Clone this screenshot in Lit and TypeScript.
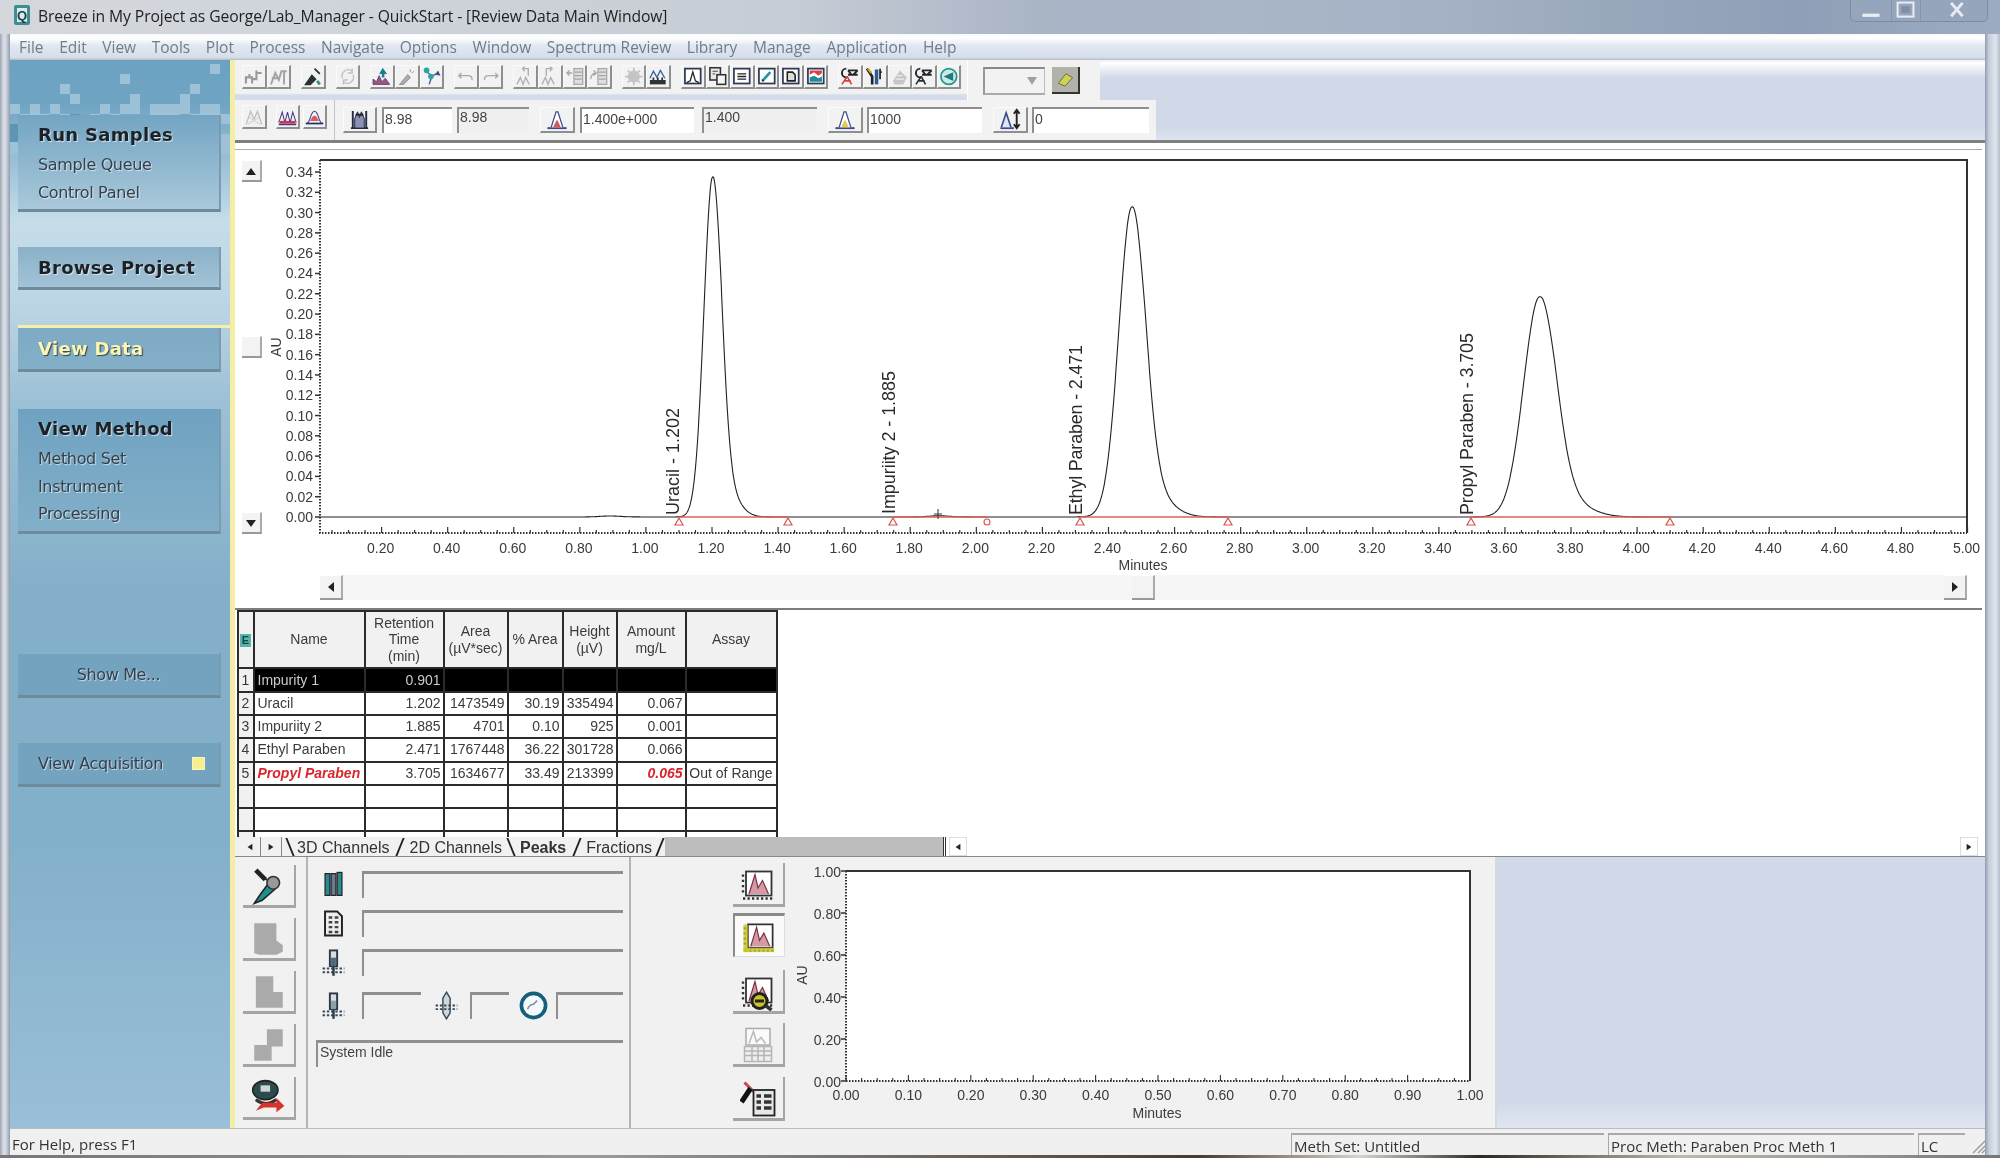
import { LitElement, html, css, svg } from "lit";
import { customElement } from "lit/decorators.js";

const ico = (body: any) => html`<svg class="i" viewBox="0 0 24 24">${body}</svg>`;
const frame = (inner: any, c = "#2d3a55") => ico(svg`<rect x="3" y="3" width="18" height="17" fill="#fff" stroke="${c}" stroke-width="2"/>${inner}`);

const T1 = [
  ico(svg`<path d="M3 20V13H10V20M10 15H15V8H21M15 8V5M7 13V9" fill="none" stroke="#9a9a9a" stroke-width="2.4"/>`),
  ico(svg`<path d="M3 21L8 8L12 16L15 6L21 6M4 14H13M18 6V21" fill="none" stroke="#a3a3a3" stroke-width="2.2"/>`),
  ico(svg`<path d="M14 3L20 9M4 21L11 11L15 15L9 21Z" fill="#26332f" stroke="#26332f" stroke-width="2"/><path d="M17 17L20 21" stroke="#3f8a6a" stroke-width="3"/>`),
  ico(svg`<path d="M6 14A7 7 0 0 1 17 6M18 10A7 7 0 0 1 7 18M17 3V8H12M7 21V16H12" fill="none" stroke="#c0c0c0" stroke-width="1.6"/>`),
  ico(svg`<path d="M2 21V15L6 18L9 11L12 18L16 14L21 21Z" fill="#a5566f" stroke="#4a3f8c"/><path d="M13 2L18 9H15V13H12V9H9Z" fill="#1e7f8c"/>`),
  ico(svg`<path d="M4 21L13 10L16 13L8 21ZM16 4V7M20 6L18 8" fill="#aeaeae" stroke="#9a9a9a" stroke-width="1.2"/>`),
  ico(svg`<path d="M5 5L12 12L20 7M12 12L9 21" stroke="#4b5d8c" stroke-width="1.6" fill="none"/><circle cx="6" cy="5" r="3.2" fill="#2ca3a8"/><circle cx="11" cy="12" r="3.2" fill="#2ca3a8"/><path d="M19 5L22 11L16 10Z" fill="#3a4e80"/>`),
  ico(svg`<path d="M6 9L3 12L6 15M3 12H13Q19 12 18 17" transform="translate(1 -1)" fill="none" stroke="#a8a8a8" stroke-width="1.6"/>`),
  ico(svg`<path d="M18 9L21 12L18 15M21 12H11Q5 12 6 17" transform="translate(-1 -1)" fill="none" stroke="#a8a8a8" stroke-width="1.6"/>`),
  ico(svg`<path d="M3 21L7 13L10 21L13 13L17 21M9 3H16V11M9 3L12 1M9 3L12 6" fill="none" stroke="#b0b0b0" stroke-width="1.6"/>`),
  ico(svg`<path d="M3 21L7 13L10 21L13 13L17 21M15 3H8V11M15 3L12 1M15 3L12 6" fill="none" stroke="#b0b0b0" stroke-width="1.6"/>`),
  ico(svg`<rect x="11" y="3" width="10" height="18" fill="#ddd" stroke="#aaa" stroke-width="1.5"/><path d="M12 7H20M12 11H20M12 15H20M3 8H9M6 5L3 8L6 11" fill="none" stroke="#a5a5a5" stroke-width="1.5"/>`),
  ico(svg`<rect x="11" y="3" width="10" height="18" fill="#ddd" stroke="#aaa" stroke-width="1.5"/><path d="M12 7H20M12 11H20M12 15H20M3 15A6 6 0 0 1 9 8M6 5L9 8L6 11" fill="none" stroke="#a5a5a5" stroke-width="1.5"/>`),
  ico(svg`<circle cx="12" cy="12" r="7" fill="#c4c4c4"/><circle cx="12" cy="12" r="2.4" fill="#efefef"/><path d="M12 2V22M2 12H22M5 5L19 19M19 5L5 19" stroke="#c4c4c4" stroke-width="2"/>`),
  ico(svg`<path d="M3 14L7 6L11 13L15 5L20 14" fill="none" stroke="#3a5fa0" stroke-width="1.5"/><rect x="3" y="16" width="18" height="5" fill="#2e3437"/><path d="M7 13V16M12 13V16M17 13V16" stroke="#2e3437" stroke-width="2"/>`),
  frame(svg`<path d="M5 19L9 17L12 7L15 17L19 19" fill="none" stroke="#222" stroke-width="1.5"/>`),
  ico(svg`<rect x="3" y="2" width="12" height="14" fill="#e8e8e8" stroke="#333" stroke-width="1.8"/><rect x="11" y="10" width="10" height="11" fill="#f5f5f5" stroke="#333" stroke-width="1.8"/><path d="M6 6H12M6 9H9" stroke="#333"/>`),
  frame(svg`<path d="M7 9H17M7 12H17M7 15H17" stroke="#222" stroke-width="1.7"/>`),
  frame(svg`<path d="M7 17L16 7" stroke="#1f9aa5" stroke-width="3.2"/><path d="M6 18L9 17L7 15Z" fill="#222"/>`),
  frame(svg`<path d="M8 7H14L17 10V17H8Z" fill="#ddd" stroke="#222" stroke-width="1.8"/>`),
  frame(svg`<path d="M5 10L10 7L15 11L19 8V5H5Z" fill="#d8404a"/><path d="M5 18V13L10 11L15 14L19 12V18Z" fill="#1f8a95"/>`),
  ico(svg`<path d="M10 10H21M10 5H21M10 5L14 10M21 5L16 10M8 3A5 5 0 0 0 8 13" fill="none" stroke="#23262a" stroke-width="2.2"/><path d="M9 12L3 21M9 12L14 21M5 17H13" stroke="#d43f3f" stroke-width="1.8" fill="none"/>`),
  ico(svg`<path d="M3 3L9 12L9 21" stroke="#222" stroke-width="3" fill="none"/><path d="M4 3L8 8" stroke="#c9a62d" stroke-width="2.4"/><path d="M14 4V21" stroke="#2a5c94" stroke-width="4"/><path d="M18 3V15M20 7H17" stroke="#222" stroke-width="2"/>`),
  ico(svg`<path d="M4 17L12 5L20 13L16 21H6Z" fill="#c6c6c6"/><path d="M7 15H17M9 11H15" stroke="#ececec" stroke-width="1.4"/>`),
  ico(svg`<path d="M10 10H21M10 5H21M10 5L14 10M21 5L16 10M8 3A5 5 0 0 0 8 13" fill="none" stroke="#23262a" stroke-width="2.2"/><path d="M9 12L3 21M9 12L14 21M5 17H13" stroke="#2b2f33" stroke-width="1.8" fill="none"/>`),
  ico(svg`<circle cx="12" cy="12" r="9" fill="#cfe9e6" stroke="#1f9a93" stroke-width="2"/><path d="M6 12L17 7V17Z" fill="#1c7c80"/>`),
];

const iGrayPk = ico(svg`<path d="M3 21L8 6L12 15L16 6L21 21" fill="#efefef" stroke="#b9b9b9" stroke-width="1.3"/><path d="M5 12L19 21M19 12L5 21" stroke="#c9c9c9"/>`);
const iRedPk = ico(svg`<path d="M2 21H22" stroke="#4b3a8c" stroke-width="2"/><path d="M2 19L6 7L9 19L12 7L15 19L18 7L22 19" fill="none" stroke="#4b3a8c" stroke-width="1.2"/><path d="M3 20V17H21V20Z" fill="#c63a4a"/>`);
const iBell = ico(svg`<path d="M3 20C8 19 7 6 12 6C17 6 16 19 21 20Z" fill="#f2f2f2" stroke="#3a3f8c" stroke-width="1.2"/><path d="M7 17C9 13 10 11 12 11C14 11 15 13 17 17Z" fill="#e05a5a"/><path d="M2 20H22" stroke="#23306b" stroke-width="2"/>`);
const iBars = ico(svg`<path d="M5 3V21M19 3V21M3 21H21" stroke="#222b4a" stroke-width="2"/><path d="M7 21V11L10 4L12 10L14 4L17 11V21Z" fill="#8c8fb8" stroke="#222"/><path d="M8 7H16" stroke="#222" stroke-width="2"/>`);
const iPkTri = (c: string) => ico(svg`<path d="M2 21H22" stroke="#3a4a8a" stroke-width="2"/><path d="M6 20L11 4H13L18 20" fill="#fff" stroke="#3a4a8a" stroke-width="1.3"/><path d="M8 20L12 12L16 20Z" fill="${c}"/>`);
const iPkArr = ico(svg`<path d="M2 21H16" stroke="#3a4a8a" stroke-width="2"/><path d="M3 20L8 5L13 20" fill="#dfe4f6" stroke="#3a4a8a" stroke-width="1.7"/><path d="M19 3V20M16 6L19 2L22 6M16 17L19 21L22 17" fill="none" stroke="#222" stroke-width="2"/>`);

const iTool = ico(svg`<path d="M4 2L10 8" stroke="#222" stroke-width="3"/><path d="M9 7L18 12L15 15L8 21L3 23L7 17L13 9Z" fill="#1f8e8f" stroke="#222" stroke-width="1"/><circle cx="15" cy="10" r="4" fill="#999" stroke="#333"/>`);
const iGA = ico(svg`<path d="M3 2H17V13L21 16V20L17 22H6L3 21Z" fill="#aaa"/>`);
const iGB = ico(svg`<path d="M4 2H15V12H21V22H4Z" fill="#aaa"/>`);
const iGC = ico(svg`<path d="M11 2H21V13H14V22H3V12H11Z" fill="#aaa"/>`);
const iDisc = ico(svg`<ellipse cx="10" cy="7" rx="8" ry="6" fill="#2d4a4f" stroke="#222"/><rect x="7" y="4" width="6" height="4" fill="#cfd4d4"/><path d="M4 13Q10 18 17 13" stroke="#333" stroke-width="2" fill="none"/><path d="M4 20L8 15H17V12L22 17L17 21V18H9Z" fill="#d8322c"/>`);
const iCol = ico(svg`<rect x="5" y="3" width="4" height="18" fill="#2a8a94" stroke="#222"/><rect x="10" y="3" width="4" height="18" fill="#6c7b92" stroke="#222"/><rect x="15" y="2" width="4" height="19" fill="#2a8a94" stroke="#222"/>`);
const iDoc = ico(svg`<path d="M5 2H15L19 6V22H5Z" fill="#eee" stroke="#222" stroke-width="1.6"/><path d="M8 7H11M13 7H16M8 11H11M13 11H16M8 15H11M13 15H16M8 19H11M13 19H16" stroke="#444" stroke-width="2"/>`);
const iInj = (c: string) => ico(svg`<rect x="9" y="2" width="6" height="13" fill="#ddd" stroke="#2a3a4a" stroke-width="1.6"/><rect x="10" y="8" width="4" height="7" fill="${c}"/><path d="M3 17H21M3 20H21" stroke="#3a4a5a" stroke-width="1.6" stroke-dasharray="2 1.5"/><path d="M12 15V23" stroke="#2a3a4a" stroke-width="2"/>`);
const iValve = ico(svg`<path d="M12 1L15 6V18L12 23L9 18V6Z" fill="#cfd8d8" stroke="#3a4a5a" stroke-width="1.2"/><path d="M3 12H21M3 15H21" stroke="#3a4a5a" stroke-width="1.5" stroke-dasharray="2 1.5"/>`);
const iGauge = ico(svg`<circle cx="12" cy="12" r="10" fill="#f4fafc" stroke="#14607a" stroke-width="3"/><path d="M7 15Q9 11 12 11L15 8" stroke="#7c929c" stroke-width="1.3" fill="none"/>`);

const chart = (extra: any = "") => ico(svg`<rect x="4" y="3" width="17" height="16" fill="#fff" stroke="#333" stroke-width="1.2"/><path d="M6 18L10 5L12 14L15 9L19 18" fill="#d69aa4" stroke="#7a3040" stroke-width=".8"/><path d="M2 21H22" stroke="#333" stroke-width="1.6" stroke-dasharray="1.5 1.5"/><path d="M2 5V17" stroke="#333" stroke-width="1.6" stroke-dasharray="1.5 2"/>${extra}`);
const rightIcons = [
  chart(),
  chart(svg`<rect x="1" y="3" width="3" height="19" fill="#c9c423" opacity=".8"/><rect x="1" y="19" width="21" height="3" fill="#c9c423" opacity=".8"/>`),
  chart(svg`<circle cx="13" cy="18" r="5" fill="#c9c423" stroke="#222" stroke-width="2"/><path d="M10 18H16" stroke="#222" stroke-width="2"/><path d="M17 21L21 24" stroke="#333" stroke-width="2.4"/>`),
  ico(svg`<rect x="4" y="1" width="16" height="11" fill="#fafafa" stroke="#aaa"/><path d="M6 11L9 3L11 10L14 7L17 11" fill="none" stroke="#bbb"/><rect x="3" y="13" width="18" height="10" fill="#eee" stroke="#b5b5b5"/><path d="M3 16H21M3 19H21M8 13V23M12 13V23M16 13V23" stroke="#b5b5b5"/>`),
  ico(svg`<path d="M3 1L9 7" stroke="#c24a4a" stroke-width="2"/><path d="M7 5L1 14" stroke="#111" stroke-width="3.4"/><rect x="9" y="6" width="14" height="17" fill="#e8e8e8" stroke="#222" stroke-width="1.2"/><path d="M11 10H14M16 10H21M11 14H14M16 14H21M11 18H14M16 18H21" stroke="#333" stroke-width="2.4"/>`),
];

const mosaic: { x: number; y: number; l: boolean }[] = [];
{
  let s = 17;
  const r = () => ((s = (s * 9301 + 49297) % 233280) / 233280);
  for (let row = 0; row < 9; row++)
    for (let col = 0; col < 22; col++) {
      const v = r();
      const p = row < 2 ? 0.07 : row < 4 ? 0.18 : row < 6 ? 0.42 : 0.72;
      if (v < p) mosaic.push({ x: col * 10, y: row * 10 + 4, l: true });
      else if (row > 4 && v > 0.93) mosaic.push({ x: col * 10, y: row * 10 + 4, l: false });
    }
  [[0,65],[0,72],[2,64],[80,64],[24,74]].forEach(([x, y]) => mosaic.push({ x, y, l: false }));
}

const X = (t: number) => 712 + (t - 1.2) * 330.4;
const Y = (v: number) => 517 - v * 1014.7;
const peaks = [
  { c: 1.202, h: 0.335, s: 0.0265 },
  { c: 2.471, h: 0.3055, s: 0.0395 },
  { c: 3.705, h: 0.217, s: 0.0485 },
  { c: 1.885, h: 0.0012, s: 0.03 },
  { c: 0.89, h: 0.001, s: 0.03 },
];
const sig = (t: number) => {
  let v = 0;
  for (const p of peaks) {
    const d = t - p.c;
    const main = Math.exp(-(d * d) / (2 * p.s * p.s));
    const dt = d - 1.6 * p.s;
    const tail = 0.07 * Math.exp(-(dt * dt) / (2 * (1.4 * p.s) * (1.4 * p.s)));
    v += p.h * (main + (d > 0 ? tail * Math.min(1, d / p.s) : 0));
  }
  return v;
};
let curve = `M320 517`;
for (let t = 0.016; t <= 5; t += 0.0015) curve += `L${X(t).toFixed(1)} ${Y(sig(t)).toFixed(1)}`;

const range = (n: number) => Array.from({ length: n }, (_, i) => i);
const tri = (x: number) => svg`<path d="M${x} 518L${x + 4} 525H${x - 4}Z" fill="none" stroke="#d9534f" stroke-width="1.2"/>`;

const mainChart = html`<svg class="plot" viewBox="262 150 1723 425" width="1723" height="425">
  <path d="M320 160H1967V533" fill="none" stroke="#333" stroke-width="2"/>
  <path d="M320 160V533H1967" fill="none" stroke="#333" stroke-width="2" stroke-dasharray="1.5 1.5"/>
  ${range(18).map((i) => { const y = Y(i * 0.02); return svg`<path d="M315 ${y}H320" stroke="#333" stroke-width="1.5"/><text class="n" x="313" y="${y + 5}" text-anchor="end">${(i * 0.02).toFixed(2)}</text>`; })}
  <text class="n" transform="translate(281 347) rotate(-90)" text-anchor="middle">AU</text>
  ${range(100).map((i) => { const t = (i + 1) * 0.05; return svg`<path d="M${X(t)} 533V${i % 4 === 3 ? 527 : 530}" stroke="#333" stroke-width="1.2"/>`; })}
  ${range(25).map((i) => { const t = (i + 1) * 0.2; return svg`<text class="n" x="${X(t) - 1}" y="553" text-anchor="middle">${t.toFixed(2)}</text>`; })}
  <text class="n" x="1143" y="570" text-anchor="middle">Minutes</text>
  <path d="${curve}L1967 517" fill="none" stroke="#222" stroke-width="1.1"/>
  <path d="M679 517H788M893 517H987M1080 517H1228M1471 517H1670" stroke="#e0605a" stroke-width="1.6"/>
  ${[679, 788, 893, 1080, 1228, 1471, 1670].map(tri)}
  <circle cx="987" cy="522" r="3" fill="none" stroke="#d9534f" stroke-width="1.1"/>
  <path d="M938 509V519M934 514H942" stroke="#333"/>
  <text class="lb" transform="translate(679 515) rotate(-90)" textLength="107">Uracil - 1.202</text>
  <text class="lb" transform="translate(895 514) rotate(-90)" textLength="143">Impuriity 2 - 1.885</text>
  <text class="lb" transform="translate(1082 515) rotate(-90)" textLength="170">Ethyl Paraben - 2.471</text>
  <text class="lb" transform="translate(1473 515) rotate(-90)" textLength="182">Propyl Paraben - 3.705</text>
</svg>`;

const smallChart = html`<svg class="plot" viewBox="790 857 707 271" width="707" height="271">
  <rect x="846" y="871" width="624" height="210" fill="#fff"/>
  <path d="M846 871H1470V1081" fill="none" stroke="#333" stroke-width="2"/>
  <path d="M846 871V1081H1470" fill="none" stroke="#333" stroke-width="2" stroke-dasharray="1.5 1.5"/>
  ${range(6).map((i) => { const y = 1081 - i * 42; return svg`<path d="M841 ${y}H846" stroke="#333" stroke-width="1.5"/><text class="n" x="841" y="${y + 6}" text-anchor="end">${(i * 0.2).toFixed(2)}</text>`; })}
  <text class="n" transform="translate(807 975) rotate(-90)" text-anchor="middle">AU</text>
  ${range(41).map((i) => svg`<path d="M${846 + i * 15.6} 1081V${i % 4 === 0 ? 1075 : 1078}" stroke="#333" stroke-width="1.1"/>`)}
  ${range(11).map((i) => svg`<text class="n" x="${846 + i * 62.4}" y="1100" text-anchor="middle">${(i * 0.1).toFixed(2)}</text>`)}
  <text class="n" x="1157" y="1118" text-anchor="middle">Minutes</text>
</svg>`;

const MENU = ["File","Edit","View","Tools","Plot","Process","Navigate","Options","Window","Spectrum Review","Library","Manage","Application","Help"];
const ROWS = [
  ["1","Impurity 1","0.901","","","","",""],
  ["2","Uracil","1.202","1473549","30.19","335494","0.067",""],
  ["3","Impuriity 2","1.885","4701","0.10","925","0.001",""],
  ["4","Ethyl Paraben","2.471","1767448","36.22","301728","0.066",""],
  ["5","Propyl Paraben","3.705","1634677","33.49","213399","0.065","Out of Range"],
  ["","","","","","","",""],
  ["","","","","","","",""],
  ["","","","","","","",""],
];

@customElement("app-root")
export class AppRoot extends LitElement {
  static styles = css`
    :host { display: block; width: 2000px; height: 1158px; overflow: hidden; font-family: "Liberation Sans", Arial, sans-serif; color: #333; }
    * { box-sizing: border-box; }
    .root { width: 2000px; height: 1158px; display: flex; flex-direction: column; background: #b8c2d0; filter: blur(0.4px); }
    .title { height: 34px; flex: none; display: flex; align-items: flex-start; padding-left: 12px;
      background: linear-gradient(90deg, #d4d8dd 0, #cdd2d9 25%, #c6ccd5 40%, #a9b4c5 52%, #a9b6c8 62%, #a5b2c5 72%, #9aa8bd 80%, #8e9fb7 90%, #9dacc0 100%); }
    .logo { width: 20px; height: 26px; margin-top: 3px; flex: none; }
    .ttext { font: 15.7px "Open Sans", sans-serif; color: #222; margin-left: 6px; line-height: 33px; letter-spacing: -0.1px; flex: none; width: 1812px; white-space: nowrap; }
    .ctl { width: 138px; height: 22px; flex: none; border: 1px solid #7d8ca3; border-top: 0; border-radius: 0 0 5px 5px; display: flex; background: #95a5bb; }
    .ctl span { display: flex; align-items: center; justify-content: center; }
    .cmin { width: 40px; } .cmax { width: 30px; border-left: 1px solid #8494ac; border-right: 1px solid #8494ac; } .cx { flex: 1; }
    .gl { width: 100%; height: 100%; }
    .win { flex: 1; display: flex; min-height: 0; }
    .fl { width: 10px; flex: none; background: linear-gradient(90deg, #9ca6b3 0, #d8dde4 35%, #d1d7df 60%, #8f9cad 100%); }
    .fr { width: 15px; flex: none; background: linear-gradient(90deg, #8d9cb2 0, #c4cdd9 25%, #dfe5ee 70%, #b4bfcd 100%); }
    .ctr { width: 1975px; display: flex; flex-direction: column; }
    .menu { height: 26px; flex: none; display: flex; gap: 15.6px; padding-left: 9px; align-items: center; font: 15.5px "Open Sans", sans-serif; color: #707c8a;
      background: linear-gradient(#f7f9fc 0, #fff 15%, #e2e8f1 45%, #d5deeb 90%, #b9bcc2 100%); }
    .body { height: 1068px; flex: none; display: flex; }
    .side { width: 225px; flex: none; position: relative; padding: 55px 0 0 8px; border-right: 5px solid #f3eea4;
      background: linear-gradient(#6ca2c1 0, #6fa4c3 4%, #c6dce9 15%, #bcd5e4 23%, #9cc0d6 32%, #84afc9 50%, #82afc9 72%, #9abfd8 100%); }
    .mos { position: absolute; left: 0; top: 0; width: 220px; height: 110px; }
    .sb { position: relative; width: 203px; padding-left: 20px; border-bottom: 3px solid #6f8a9c; border-right: 2px solid #7a9bb0; font: 16px "DejaVu Sans", sans-serif; color: #34414d; text-shadow: 1px 1px 1px rgba(255,255,255,.65); }
    .sb b { display: block; font-size: 18px; color: #1b2127; line-height: 24px; letter-spacing: 0.3px; }
    .sb span { display: block; line-height: 27.5px; letter-spacing: -0.35px; }
    .run { height: 97px; padding-top: 8px; background: linear-gradient(#73a5c3, #a9c8da); }
    .run b { margin-bottom: 4px; }
    .brw { height: 43px; margin-top: 35px; padding-top: 9px; background: linear-gradient(#8ab1c8, #a3c3d6); }
    .hl { height: 3px; margin-top: 35px; background: #f5f0a6; }
    .vd { height: 44px; padding-top: 9px; background: linear-gradient(#7eaac5, #84afc8); }
    .vd b { color: #fbf6b4; text-shadow: 1px 1px 1px #33434e; }
    .vm { height: 125px; margin-top: 37px; padding-top: 8px; background: linear-gradient(#6fa2c1, #82afc8); }
    .vm b { margin-bottom: 4px; }
    .sm { height: 46px; margin-top: 118px; padding: 0; display: flex; align-items: center; justify-content: center; background: #74a3bf; border-top: 2px solid #84b0ca; }
    .va { height: 46px; margin-top: 43px; display: flex; align-items: center; justify-content: space-between; padding-right: 14px; background: #74a3bf; border-top: 2px solid #84b0ca; }
    .va span, .sm span { line-height: 1; }
    .sq { width: 13px; height: 13px; background: #f7ee8e; border: 1px solid #f8f4c0; }
    .main { width: 1750px; flex: none; display: flex; flex-direction: column; background: #fff; }
    .tr { height: 40px; flex: none; display: flex; }
    .t1 { width: 732px; flex: none; padding: 5px 0 0 7px; display: flex; gap: 10px; background: linear-gradient(#f2f2f2 0, #f2f2f2 83%, #d3dcea 88%, #d3dcea 100%); }
    .g { display: flex; }
    .tb { width: 24.6px; height: 24px; flex: none; padding: 0; border-right: 2px solid #8f8f8f; border-bottom: 2px solid #8f8f8f; border-top: 1px solid #fafafa; border-left: 1px solid #fafafa; background: #f2f2f2; }
    .i { display: block; width: 100%; height: 100%; }
    .t1b { width: 133px; flex: none; background: #f2f2f2; display: flex; padding: 7px 0 0 15px; gap: 7px; border-left: 1px solid #fff; }
    .dd { width: 62px; height: 28px; border-left: 2px solid #999; border-top: 2px solid #888; border-right: 1px solid #bbb; border-bottom: 2px solid #aaa; display: flex; align-items: center; justify-content: flex-end; padding-right: 7px; background: #f2f2f2; }
    .er { width: 28px; height: 27px; padding: 3px; background: #b2b2aa; border-right: 2px solid #333; border-bottom: 2px solid #333; }
    .fill { flex: 1; background: linear-gradient(#e9eef5 0, #fff 8%, #f0f3f8 18%, #d1d9e9 45%, #d1d9e9 100%); }
    .fill2 { flex: 1; background: linear-gradient(#d1d9e9 0, #d1d9e9 70%, #dde3ef 100%); }
    .t2 { width: 921px; flex: none; padding-left: 7px; display: flex; align-items: center; background: #f2f2f2; }
    .t2 .tb { height: 24px; }
    .up { margin-bottom: 6px; } .t2 .w24 { width: 24px; } .t2 .w25 { width: 25px; } .t2 .w34 { width: 34px; height: 26px; } .t2 .w35 { width: 35px; height: 26px; }
    .ml3 { margin-left: 3px; } .ml4 { margin-left: 4px; } .ml5 { margin-left: 5px; } .ml8 { margin-left: 8px; } .ml9 { margin-left: 9px; } .ml11 { margin-left: 11px; }
    .vs { width: 1px; height: 40px; background: #c4c4c4; margin-left: 7px; }
    .inp { height: 26px; flex: none; border-top: 2px solid #8f8f8f; border-left: 2px solid #8f8f8f; background: #fff; font-size: 14px; padding-left: 1px; line-height: 20px; color: #444; }
    .dis { background: #f0f0f0; line-height: 16px; }
    .w70 { width: 70px; } .w72 { width: 72px; } .w114 { width: 114px; } .w115 { width: 115px; } .w117 { width: 117px; }
    .bar1 { height: 3px; flex: none; background: #7f7f7f; }
    .bar2 { height: 7px; flex: none; background: #fff; border-bottom: 1px solid #aaa; margin-right: 3px; }
    .cr { height: 425px; flex: none; display: flex; }
    .vsc { width: 27px; flex: none; padding: 10px 0 41px 7px; display: flex; flex-direction: column; justify-content: space-between; }
    .sbtn { width: 20px; height: 22px; flex: none; display: flex; align-items: center; justify-content: center; background: #f3f3f3; border-right: 2px solid #aaa; border-bottom: 2px solid #999; border-top: 1px solid #fff; }
    .sbtn svg { width: 10px; height: 10px; }
    .plot { display: block; flex: none; }
    .n { font: 14px "Liberation Sans", sans-serif; fill: #3a3a3a; }
    .lb { font: 18px "Liberation Sans", sans-serif; fill: #2a2a2a; }
    .hs { height: 25px; flex: none; margin: 0 18px 8px 85px; display: flex; justify-content: space-between; background: #f6f6f6; }
    .hs .sbtn { height: 25px; width: 23px; }
    .line { height: 2px; flex: none; background: #7d7d7d; margin-right: 3px; }
    .tw { height: 227px; flex: none; padding-left: 1.5px; overflow: hidden; }
    table { border-collapse: collapse; table-layout: fixed; width: 539px; font-size: 14px; }
    .c0 { width: 16px; } .c1 { width: 111px; } .c2 { width: 79px; } .c3 { width: 64px; } .c4 { width: 55px; } .c5 { width: 54px; } .c6 { width: 69px; } .c7 { width: 91px; }
    th, td { border: 2px solid #2b2b2b; padding: 0 3px; font-weight: 400; height: 23.2px; line-height: 15px; white-space: nowrap; color: #3b3b3b; }
    th { height: 57px; background: #f1f1f1; text-align: center; white-space: normal; padding: 0; line-height: 16.5px; }
    td { text-align: right; padding-right: 2px; padding-left: 2px; }
    td.nm { text-align: left; padding-left: 3px; } td.rn { text-align: center; background: #f1f1f1; padding: 0; }
    td.as { text-align: center; padding: 0; }
    tr.sel td { background: #000; color: #c9c9c9; height: 24px; } tr.sel td.rn { background: #f1f1f1; color: #333; }
    td.bad { color: #d9262c; font-weight: 700; font-style: italic; }
    .e { display: inline-block; width: 11px; height: 13px; background: #59b3a9; color: #16444a; font-size: 11px; line-height: 13px; font-weight: 700; vertical-align: middle; }
    .tabs { height: 20px; flex: none; display: flex; background: #fff; border-bottom: 1px solid #888; }
    .tl { width: 708px; flex: none; display: flex; align-items: center; font-size: 16px; color: #333; padding-left: 5px; background: #f1f1f1; }
    .ar { width: 21px; height: 19px; display: flex; align-items: center; justify-content: center; border-right: 1px solid #888; }
    .ar svg { width: 8px; height: 8px; }
    .sl { width: 1.5px; height: 18px; flex: none; background: #222; margin: 0 9.25px; }
    .sl.first { margin: 0 6.75px; }
    .sl.tight { margin: 0 8.25px; }
    .sl.last { margin: 0 4.5px 0 7px; }
    .bk { transform: skewX(22deg); } .fw { transform: skewX(-22deg); }
    .tx { flex: none; line-height: 19px; margin-top: 1px; }
    .pk { font-weight: 700; }
    .rest { flex: 1; height: 19px; background: #bdbdbd; align-self: flex-start; }
    .tsc { flex: 1; display: flex; justify-content: space-between; border-left: 3px double #333; background: #fff; padding: 0 7px 0 3px; }
    .tsc .ar { border: 1px solid #ddd; width: 18px; }
    .bot { height: 271px; flex: none; display: flex; }
    .pan { width: 1262px; flex: none; display: flex; background: #f1f1f1; border-right: 2px solid #d9d9d9; }
    .pa { width: 73px; flex: none; padding: 8px 0 0 8px; border-right: 2px solid #b5b5b5; display: flex; flex-direction: column; gap: 10px; }
    .big { width: 53px; height: 43px; flex: none; padding: 2px 6px 0; border-right: 2px solid #a5a5a5; border-bottom: 3px solid #a5a5a5; }
    .big.on { border-right: 1px solid #ddd; border-bottom: 1px solid #ddd; border-top: 3px solid #8a8a8a; border-left: 2px solid #8a8a8a; background: #fafafa; }
    .pb { width: 323px; flex: none; padding: 14px 8px 0 8px; border-right: 2px solid #b5b5b5; display: flex; flex-direction: column; gap: 12px; }
    .fr1 { display: flex; align-items: center; height: 27px; flex: none; }
    .fi { width: 29px; height: 29px; margin-left: 3px; flex: none; }
    .fld { height: 27px; border-top: 3px solid #8f8f8f; border-left: 2px solid #8f8f8f; flex: none; font-size: 14px; line-height: 19px; padding-left: 2px; color: #444; }
    .ff { width: 261px; margin-left: 14px; }
    .f1 { width: 59px; margin-left: 14px; } .fi2 { margin-left: 11px; } .f2 { width: 39px; margin-left: 9px; } .fi3 { margin-left: 10px; } .f3 { width: 67px; margin-left: 8px; }
    .fr2 { height: 30px; margin-top: 2px; }
    .fs { width: 307px; margin-top: 8px; }
    .pc { flex: 1; display: flex; padding-left: 102px; }
    .pcb { width: 52px; flex: none; padding-top: 6px; display: flex; flex-direction: column; gap: 8px; margin-right: 5px; }
    .pcb .big { width: 52px; height: 44px; padding: 3px 7px 0; }
    .pcb .big:nth-child(2) { margin-top: -2px; }
    .pcb .big:nth-child(3) { margin-top: 5px; }
    .pcb .big:nth-child(4) { margin-top: 1px; }
    .pcb .big:nth-child(5) { margin-top: 2px; }
    .blue { flex: 1; background: linear-gradient(#d1d9e9 0, #d1d9e9 90%, #e0e6f1 100%); }
    .st { height: 27px; flex: none; display: flex; background: #f0f0f0; border-top: 1px solid #bcbcbc; font: 15px "Open Sans", sans-serif; color: #333; padding-left: 2px; }
    .st div { line-height: 24px; white-space: nowrap; }
    .s0 { width: 1279px; flex: none; padding-top: 3px; }
    .st .sp { height: 22px; margin-top: 4px; border-top: 2px solid #a9a9a9; border-left: 1px solid #a9a9a9; padding-left: 2px; line-height: 22px; flex: none; }
    .s1 { width: 313px; } .s2 { width: 306px; margin-left: 4px; } .s3 { width: 47px; margin-left: 4px; }
    .grip { width: 22px; height: 22px; margin-top: 4px; flex: none; }
    .strip { height: 3px; flex: none; background: linear-gradient(90deg, #777 0, #999 30%, #4a3a30 60%, #d7d3cd 68%, #2e2722 74%, #bfb8ae 84%, #777 100%); }
  `;

  private tri(d: string) {
    return html`<svg viewBox="0 0 10 10"><path d="${d}" fill="#222"/></svg>`;
  }

  render() {
    return html`<div class="root">
      <div class="title">
        <svg class="logo" viewBox="0 0 20 26"><rect x="2" y="2" width="16" height="20" rx="2" fill="#3f8c93"/><rect x="5" y="5" width="10" height="14" fill="#d8ecec"/><text x="10" y="17" font-size="13" font-weight="700" font-family="Liberation Sans" text-anchor="middle" fill="#17424a">Q</text></svg>
        <div class="ttext">Breeze in My Project as George/Lab_Manager - QuickStart - [Review Data Main Window]</div>
        <div class="ctl">
          <span class="cmin"><svg class="gl" viewBox="0 0 40 22"><path d="M11 16H29" stroke="#e9ecf0" stroke-width="3.4"/></svg></span>
          <span class="cmax"><svg class="gl" viewBox="0 0 30 22"><rect x="6" y="2.5" width="17" height="15" fill="none" stroke="#e9ecf0" stroke-width="2.2"/><rect x="10" y="6.5" width="9" height="7" fill="#7f8fa7"/></svg></span>
          <span class="cx"><svg class="gl" viewBox="0 0 66 22"><path d="M30 3L42 17M42 3L30 17" stroke="#e9ecf0" stroke-width="3"/></svg></span>
        </div>
      </div>
      <div class="win">
        <div class="fl"></div>
        <div class="ctr">
          <div class="menu">${MENU.map((m) => html`<span>${m}</span>`)}</div>
          <div class="body">
            ${this.sidebar()}
            ${this.mainArea()}
          </div>
          <div class="st">
            <div class="s0">For Help, press F1</div>
            <div class="sp s1">Meth Set: Untitled</div>
            <div class="sp s2">Proc Meth: Paraben Proc Meth 1</div>
            <div class="sp s3">LC</div>
            <svg class="grip" viewBox="0 0 22 22"><path d="M8 20L20 8M13 20L20 13M17 20L20 17" stroke="#9a9a9a" stroke-width="1.4"/></svg>
          </div>
        </div>
        <div class="fr"></div>
      </div>
      <div class="strip"></div>
    </div>`;
  }

  sidebar() {
    return html`<div class="side">
      <svg class="mos" viewBox="0 0 220 110">${mosaic.map((m) => svg`<rect x="${m.x}" y="${m.y}" width="10" height="10" fill="${m.l ? "#9dc1d6" : "#5d95b6"}"/>`)}</svg>
      <div class="sb run"><b>Run Samples</b><span>Sample Queue</span><span>Control Panel</span></div>
      <div class="sb brw"><b>Browse Project</b></div>
      <div class="hl"></div>
      <div class="sb vd"><b>View Data</b></div>
      <div class="sb vm"><b>View Method</b><span>Method Set</span><span>Instrument</span><span>Processing</span></div>
      <div class="sb sm"><span>Show Me...</span></div>
      <div class="sb va"><span>View Acquisition</span><i class="sq"></i></div>
    </div>`;
  }

  mainArea() {
    const groups = [2, 1, 1, 3, 2, 4, 2, 6, 5];
    let k = 0;
    return html`<div class="main">
      <div class="tr">
        <div class="t1">${groups.map((n) => html`<div class="g">${range(n).map(() => html`<div class="tb">${T1[k++]}</div>`)}</div>`)}</div>
        <div class="t1b">
          <div class="dd"><svg width="10" height="8" viewBox="0 0 10 8"><path d="M0 0H10L5 8Z" fill="#a0a0a0"/></svg></div>
          <div class="er"><svg class="i" viewBox="0 0 20 20"><path d="M3 14L11 4L18 8L10 17Z" fill="#cfd25a" stroke="#6a6a30"/></svg></div>
        </div>
        <div class="fill"></div>
      </div>
      <div class="tr">
        <div class="t2">
          <div class="tb w25 up">${iGrayPk}</div>
          <div class="tb w24 up ml9">${iRedPk}</div>
          <div class="tb w24 up ml3">${iBell}</div>
          <div class="vs"></div>
          <div class="tb w34 ml8">${iBars}</div>
          <div class="inp w70 ml5">8.98</div>
          <div class="inp dis w72 ml5">8.98</div>
          <div class="tb w35 ml11">${iPkTri("#d65555")}</div>
          <div class="inp w114 ml5">1.400e+000</div>
          <div class="inp dis w115 ml8">1.400</div>
          <div class="tb w35 ml11">${iPkTri("#e6c94a")}</div>
          <div class="inp w115 ml4">1000</div>
          <div class="tb w35 ml11">${iPkArr}</div>
          <div class="inp w117 ml4">0</div>
        </div>
        <div class="fill2"></div>
      </div>
      <div class="bar1"></div>
      <div class="bar2"></div>
      <div class="cr">
        <div class="vsc">
          <div class="sbtn">${this.tri("M5 2L10 9H0Z")}</div>
          <div class="sbtn"></div>
          <div class="sbtn">${this.tri("M5 9L10 2H0Z")}</div>
        </div>
        ${mainChart}
      </div>
      <div class="hs">
        <div class="sbtn">${this.tri("M2 5L8 0V10Z")}</div>
        <div class="sbtn"></div>
        <div class="sbtn">${this.tri("M8 5L2 0V10Z")}</div>
      </div>
      <div class="line"></div>
      <div class="tw">
        <table>
          <colgroup><col class="c0"><col class="c1"><col class="c2"><col class="c3"><col class="c4"><col class="c5"><col class="c6"><col class="c7"></colgroup>
          <tr><th><span class="e">E</span></th><th>Name</th><th>Retention<br>Time<br>(min)</th><th>Area<br>(µV*sec)</th><th>% Area</th><th>Height<br>(µV)</th><th>Amount<br>mg/L</th><th>Assay</th></tr>
          ${ROWS.map((r, i) => html`<tr class="${i === 0 ? "sel" : ""}">
            <td class="rn">${r[0]}</td>
            <td class="nm ${i === 4 ? "bad" : ""}">${r[1]}</td>
            <td>${r[2]}</td><td>${r[3]}</td><td>${r[4]}</td><td>${r[5]}</td>
            <td class="${i === 4 ? "bad" : ""}">${r[6]}</td><td class="as">${r[7]}</td></tr>`)}
        </table>
      </div>
      <div class="tabs">
        <div class="tl">
          <span class="ar">${this.tri("M2 5L8 1V9Z")}</span>
          <span class="ar">${this.tri("M8 5L2 1V9Z")}</span>
          <span class="sl bk first"></span><span class="tx">3D Channels</span>
          <span class="sl fw"></span><span class="tx">2D Channels</span>
          <span class="sl bk tight"></span><span class="tx pk">Peaks</span>
          <span class="sl fw"></span><span class="tx">Fractions</span>
          <span class="sl fw last"></span>
          <span class="rest"></span>
        </div>
        <div class="tsc"><span class="ar">${this.tri("M2 5L8 1V9Z")}</span><span class="ar">${this.tri("M8 5L2 1V9Z")}</span></div>
      </div>
      <div class="bot">
        <div class="pan">
          <div class="pa">${[iTool, iGA, iGB, iGC, iDisc].map((x) => html`<div class="big">${x}</div>`)}</div>
          <div class="pb">
            <div class="fr1"><div class="fi">${iCol}</div><div class="fld ff"></div></div>
            <div class="fr1"><div class="fi">${iDoc}</div><div class="fld ff"></div></div>
            <div class="fr1"><div class="fi">${iInj("#4a6a7a")}</div><div class="fld ff"></div></div>
            <div class="fr1 fr2">
              <div class="fi">${iInj("#8aa0aa")}</div><div class="fld f1"></div>
              <div class="fi fi2">${iValve}</div><div class="fld f2"></div>
              <div class="fi fi3">${iGauge}</div><div class="fld f3"></div>
            </div>
            <div class="fld fs">System Idle</div>
          </div>
          <div class="pc">
            <div class="pcb">${rightIcons.map((x, i) => html`<div class="big ${i === 1 ? "on" : ""}">${x}</div>`)}</div>
            ${smallChart}
          </div>
        </div>
        <div class="blue"></div>
      </div>
    </div>`;
  }
}
